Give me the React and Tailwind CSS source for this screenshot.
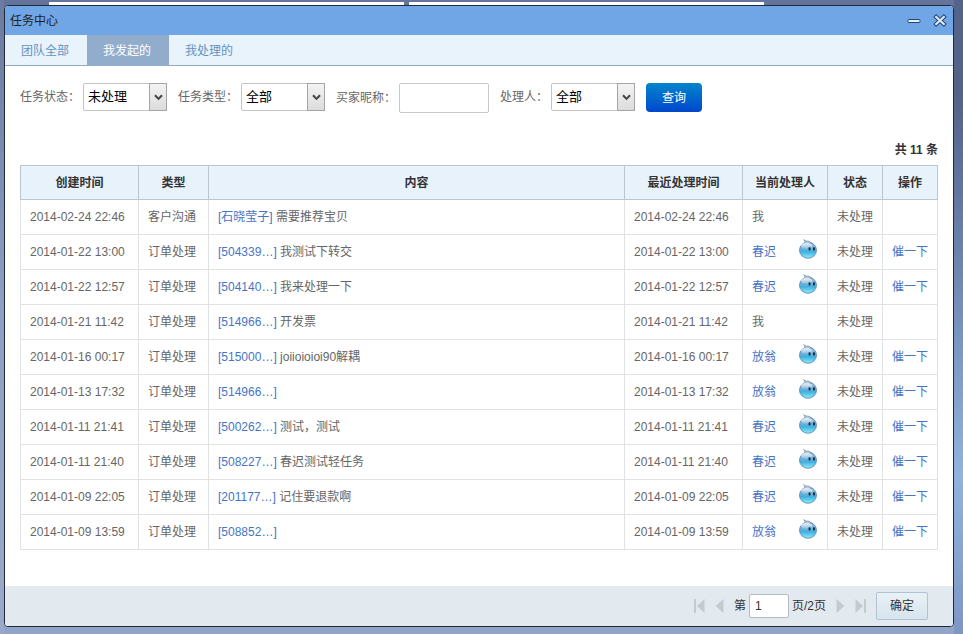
import { useState } from 'react';

const tabs = ['团队全部', '我发起的', '我处理的'];

const tasks = [
    { created: '2014-02-24 22:46', type: '客户沟通', ref: '[石晓莹子]', content: '需要推荐宝贝', owner: '我', mine: true },
    { created: '2014-01-22 13:00', type: '订单处理', ref: '[504339…]', content: '我测试下转交', owner: '春迟' },
    { created: '2014-01-22 12:57', type: '订单处理', ref: '[504140…]', content: '我来处理一下', owner: '春迟' },
    { created: '2014-01-21 11:42', type: '订单处理', ref: '[514966…]', content: '开发票', owner: '我', mine: true },
    { created: '2014-01-16 00:17', type: '订单处理', ref: '[515000…]', content: 'joiioioioi90解耦', owner: '放翁' },
    { created: '2014-01-13 17:32', type: '订单处理', ref: '[514966…]', content: '', owner: '放翁' },
    { created: '2014-01-11 21:41', type: '订单处理', ref: '[500262…]', content: '测试，测试', owner: '春迟' },
    { created: '2014-01-11 21:40', type: '订单处理', ref: '[508227…]', content: '春迟测试轻任务', owner: '春迟' },
    { created: '2014-01-09 22:05', type: '订单处理', ref: '[201177…]', content: '记住要退款啊', owner: '春迟' },
    { created: '2014-01-09 13:59', type: '订单处理', ref: '[508852…]', content: '', owner: '放翁' },
];

function DropIcon() {
    return (
        <svg className="mb-[6px]" width="20" height="20" viewBox="0 0 20 20" aria-hidden="true">
            <defs>
                <linearGradient id="dropBody" x1="0" y1="0" x2="0" y2="1">
                    <stop offset="0" stopColor="#a9c6dd" />
                    <stop offset="0.4" stopColor="#6fb0da" />
                    <stop offset="0.6" stopColor="#3fb0e0" />
                    <stop offset="1" stopColor="#8feefa" />
                </linearGradient>
                <linearGradient id="dropShine" x1="0" y1="0" x2="0" y2="1">
                    <stop offset="0" stopColor="#fff" stopOpacity="0.8" />
                    <stop offset="1" stopColor="#fff" stopOpacity="0.1" />
                </linearGradient>
            </defs>
            <ellipse cx="10" cy="11.2" rx="8.5" ry="8.1" fill="url(#dropBody)" stroke="#5583a8" strokeWidth=".8" />
            <path d="M5.6 .6 C6.8 1.6 7 2.6 6.8 4.2 L13.6 4.4 C12.4 2.4 10 1.8 8.4 2 C7.4 1.9 6.6 1.3 5.6 .6Z" fill="#b3cde0" stroke="#5d7f9c" strokeWidth=".6" />
            <ellipse cx="8.6" cy="6.8" rx="5.6" ry="3" fill="url(#dropShine)" />
            <rect x="10.6" y="8.2" width="1.9" height="3.2" rx=".7" fill="#12293d" />
            <rect x="15" y="8.2" width="1.9" height="3.2" rx=".7" fill="#12293d" />
        </svg>
    );
}

function FilterSelect({ id, label, options }) {
    return (
        <div className="flex items-center gap-[3px]">
            <label htmlFor={id}>{label}：</label>
            <div className="relative">
                <select
                    id={id}
                    className="block h-7 w-21 appearance-none rounded-xs border border-[#c3c3c3] bg-white pl-1 text-[13px] text-black"
                >
                    {options.map((o) => (
                        <option key={o}>{o}</option>
                    ))}
                </select>
                <span className="pointer-events-none absolute inset-y-0 right-0 flex w-[18px] items-center justify-center border border-[#a5a5a5] bg-linear-to-b from-[#f3f3f3] to-[#dcdcdc]">
                    <svg width="9" height="7" viewBox="0 0 9 7" aria-hidden="true">
                        <path d="M1 1.2 L4.5 4.9 L8 1.2" fill="none" stroke="#444" strokeWidth="2" />
                    </svg>
                </span>
            </div>
        </div>
    );
}

function PageButton({ label, last, flip }) {
    return (
        <button type="button" aria-label={label} className={flip ? 'rotate-180' : ''}>
            <svg width={last ? 11 : 9} height="14" viewBox={last ? '0 0 11 14' : '0 0 9 14'} aria-hidden="true">
                {last && <rect x="0" y="0" width="2" height="14" fill="#c3cad0" />}
                <path d={last ? 'M10.5 0 V14 L3 7Z' : 'M8.5 0 V14 L0.5 7Z'} fill="#c3cad0" />
            </svg>
        </button>
    );
}

export default function App() {
    const [activeTab, setActiveTab] = useState('我发起的');
    const [page, setPage] = useState('1');

    return (
        <div className="flex min-h-screen bg-linear-to-b from-[#64739a] to-[#92a5c8] font-['Liberation_Sans','Noto_Sans_CJK_SC',sans-serif] text-xs text-[#666]">
            <div className="w-1 shrink-0 bg-linear-to-b from-[#6b7a9e] via-[#8fa0c2] to-[#9aa9ca]"></div>

            <div className="flex min-w-0 flex-1 flex-col pb-[7px]">
                {/* Edges of the windows behind */}
                <div className="flex h-[5px] gap-[5px] pt-[2px] pl-[45px]">
                    <div className="w-[355px] bg-white"></div>
                    <div className="w-[355px] bg-white"></div>
                </div>

                <div className="flex flex-1 flex-col overflow-hidden rounded border border-[#1f2a3a] bg-white">
                    {/* Title bar */}
                    <header className="flex h-[29px] items-center justify-between bg-[#70a6e6] pr-[6px] pl-[5px]">
                        <h1 className="text-[#222]">任务中心</h1>
                        <div className="flex items-center gap-3">
                            <button type="button" aria-label="最小化">
                                <svg width="14" height="14" viewBox="0 0 14 14" aria-hidden="true">
                                    <rect x="1" y="5.5" width="12" height="3" rx="1" fill="#e6f1fc" stroke="#24466e" />
                                </svg>
                            </button>
                            <button type="button" aria-label="关闭">
                                <svg width="14" height="14" viewBox="0 0 14 14" aria-hidden="true">
                                    <path d="M3.2 3 L10.8 10 M10.8 3 L3.2 10" stroke="#24466e" strokeWidth="4.2" strokeLinecap="square" />
                                    <path d="M3.2 3 L10.8 10 M10.8 3 L3.2 10" stroke="#dcebfa" strokeWidth="2.2" strokeLinecap="square" />
                                </svg>
                            </button>
                        </div>
                    </header>

                    {/* Tabs */}
                    <nav className="flex h-[31px] border-b border-[#92abc4] bg-[#e8f3fc]">
                        {tabs.map((tab) => (
                            <button
                                key={tab}
                                type="button"
                                onClick={() => setActiveTab(tab)}
                                className={`-mb-px pr-[18px] pl-4 ${activeTab === tab ? 'bg-[#92accc] text-white' : 'text-[#6492bd]'}`}
                            >
                                {tab}
                            </button>
                        ))}
                    </nav>

                    <main className="flex-1 px-[15px] pt-[17px] pb-9">
                        {/* Filters */}
                        <form className="flex flex-wrap items-start gap-[11px]" onSubmit={(e) => e.preventDefault()}>
                            <FilterSelect id="status" label="任务状态" options={['未处理', '已处理', '全部']} />
                            <FilterSelect id="type" label="任务类型" options={['全部', '订单处理', '客户沟通']} />
                            <div className="flex items-center gap-[3px]">
                                <label htmlFor="buyer">买家昵称：</label>
                                <input id="buyer" type="text" className="h-[30px] w-[90px] rounded-xs border border-[#c8c8c8] px-1" />
                            </div>
                            <FilterSelect id="owner" label="处理人" options={['全部', '春迟', '放翁']} />
                            <button
                                type="submit"
                                className="h-[29px] w-14 rounded bg-linear-to-b from-[#0084cc] to-[#0046cc] text-white"
                            >
                                查询
                            </button>
                        </form>

                        <p className="mt-7 mb-[6px] text-right leading-[18px] font-bold text-[#333]">共 11 条</p>

                        <table className="w-full table-fixed border-collapse">
                            <thead>
                                <tr className="h-[34px] bg-[#e8f2fb] text-[#333] [&>th]:border [&>th]:border-[#b9c7d3]">
                                    <th className="w-[118px]">创建时间</th>
                                    <th className="w-[70px]">类型</th>
                                    <th>内容</th>
                                    <th className="w-[118px]">最近处理时间</th>
                                    <th className="w-[85px]">当前处理人</th>
                                    <th className="w-[55px]">状态</th>
                                    <th className="w-[55px]">操作</th>
                                </tr>
                            </thead>
                            <tbody>
                                {tasks.map((task, i) => (
                                    <tr key={i} className="h-[35px] whitespace-nowrap [&>td]:border [&>td]:border-[#e0e3e5] [&>td]:px-[9px]">
                                        <td>{task.created}</td>
                                        <td>{task.type}</td>
                                        <td>
                                            <a href="#" className="text-[#4675c5]">{task.ref}</a> {task.content}
                                        </td>
                                        <td>{task.created}</td>
                                        <td>
                                            {task.mine ? (
                                                task.owner
                                            ) : (
                                                <div className="flex items-center justify-between">
                                                    <a href="#" className="text-[#4675c5]">{task.owner}</a>
                                                    <DropIcon />
                                                </div>
                                            )}
                                        </td>
                                        <td>未处理</td>
                                        <td>{!task.mine && <a href="#" className="text-[#4675c5]">催一下</a>}</td>
                                    </tr>
                                ))}
                            </tbody>
                        </table>
                    </main>

                    {/* Pagination */}
                    <footer className="flex h-10 items-center justify-end gap-[10px] bg-[#e2e9ef] pr-[25px] text-[#333]">
                        <PageButton label="首页" last />
                        <PageButton label="上一页" />
                        <div className="flex items-center gap-[3px]">
                            <label htmlFor="page">第</label>
                            <input
                                id="page"
                                type="text"
                                value={page}
                                onChange={(e) => setPage(e.target.value)}
                                className="h-6 w-10 rounded-xs border border-[#b3bcc4] bg-white px-[5px]"
                            />
                            <span>页/2页</span>
                        </div>
                        <PageButton label="下一页" flip />
                        <PageButton label="末页" last flip />
                        <button
                            type="button"
                            className="h-7 w-[52px] rounded-xs border border-[#afc3d0] bg-linear-to-b from-[#e9f1f6] to-[#d6e4ed]"
                        >
                            确定
                        </button>
                    </footer>
                </div>
            </div>

            <div className="w-[9px] shrink-0 bg-linear-to-b from-[#53638a] from-15% via-[#8fb4e0] via-75% to-[#7d97c4]"></div>
        </div>
    );
}
